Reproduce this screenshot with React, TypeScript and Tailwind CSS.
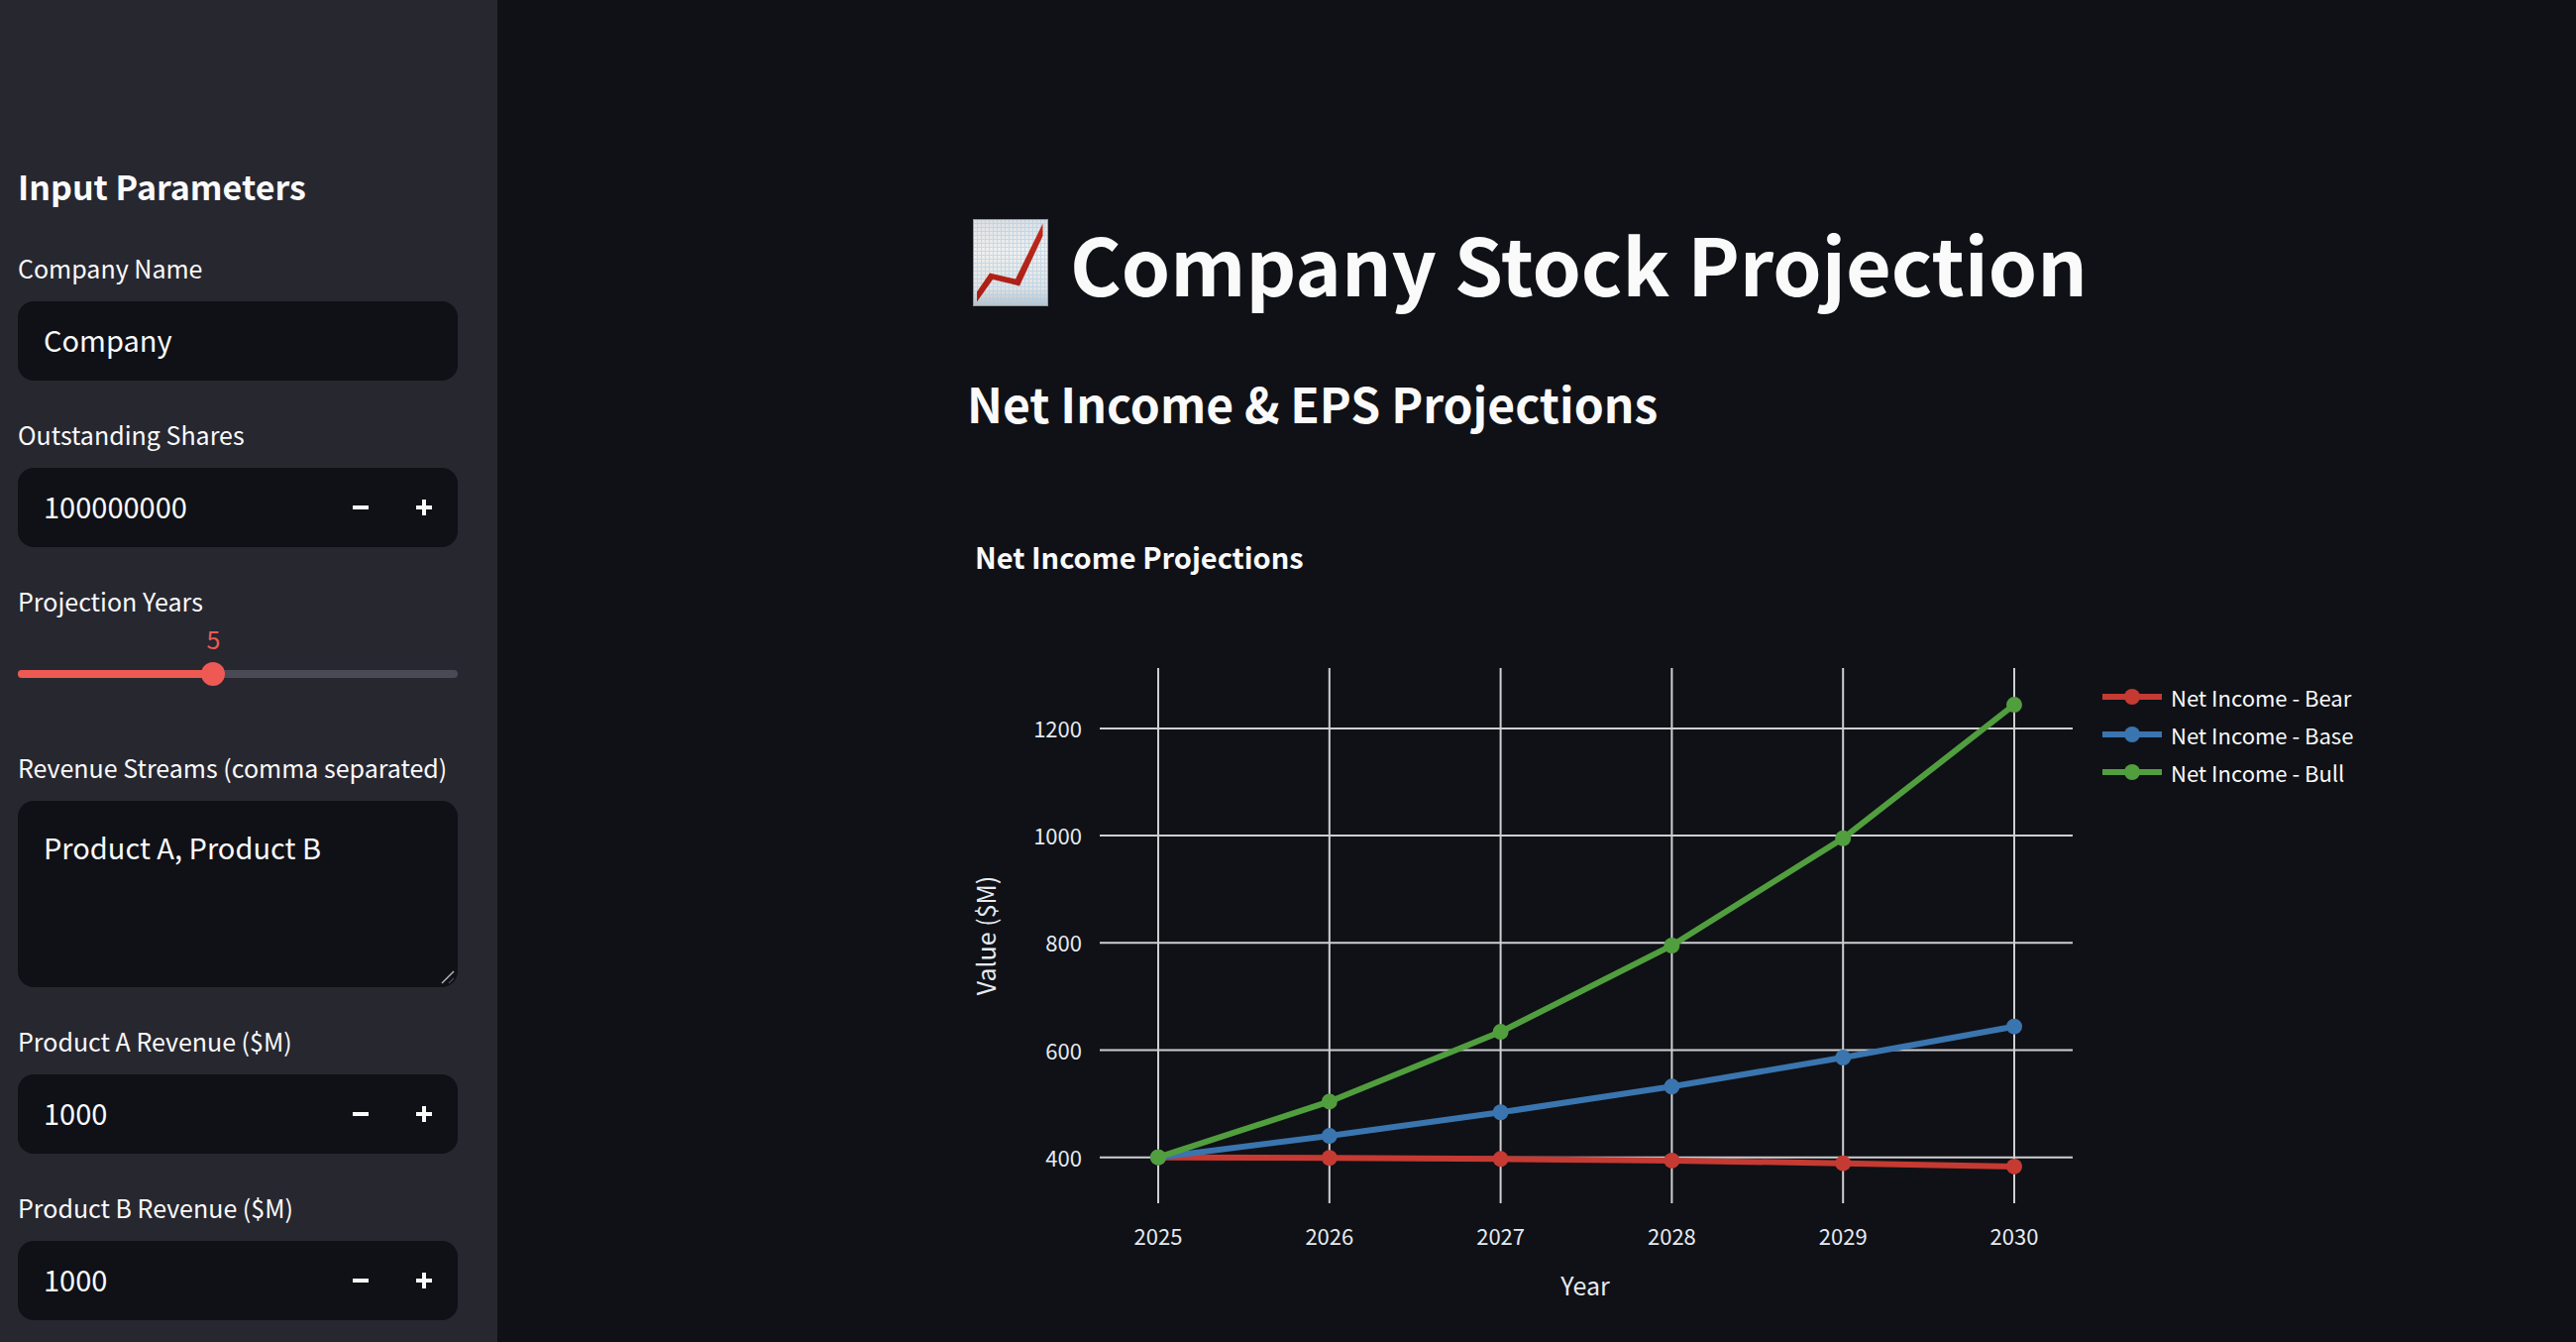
import { useState } from "react";

const GRID_COLOR = "#cfcfd2";
const FONT = "font-['Noto_Sans_CJK_SC','Noto_Sans',sans-serif]";

const years = [2025, 2026, 2027, 2028, 2029, 2030];
const ticks = [400, 600, 800, 1000, 1200];
const series = [
  { name: "Net Income - Bear", color: "#c53a32", values: [400, 399, 397, 394, 389, 383] },
  { name: "Net Income - Base", color: "#3a75af", values: [400, 440, 484, 532, 586, 644] },
  { name: "Net Income - Bull", color: "#519e3e", values: [400, 504, 634, 795, 995, 1244] },
];

const xOf = (i: number) => 193 + i * 172.8;
const yOf = (v: number) => 667.7 - ((v - 400) / 200) * 108.2;

function Label({ id, children }: { id: string; children: string }) {
  return (
    <label htmlFor={id} className="mb-3 block text-[25px] leading-[44px] whitespace-nowrap">
      {children}
    </label>
  );
}

function NumberField({ id, label, initial }: { id: string; label: string; initial: number }) {
  const [value, setValue] = useState(initial);
  return (
    <div>
      <Label id={id}>{label}</Label>
      <div className="flex h-20 items-stretch overflow-hidden rounded-2xl bg-[#0f1116]">
        <input
          id={id}
          type="text"
          inputMode="numeric"
          value={value}
          onChange={(e) => setValue(Number(e.target.value) || 0)}
          className="min-w-0 flex-1 bg-transparent pb-1 pl-[26px] text-[29px] leading-[44px] outline-none"
        />
        <button
          type="button"
          aria-label={"Decrease " + label}
          onClick={() => setValue(value - 1)}
          className="flex w-16 items-center justify-center"
        >
          <svg width="16" height="16" viewBox="0 0 16 16" fill="currentColor" aria-hidden="true">
            <path d="M0 6h16v4H0z" />
          </svg>
        </button>
        <button
          type="button"
          aria-label={"Increase " + label}
          onClick={() => setValue(value + 1)}
          className="mr-[2px] flex w-16 items-center justify-center"
        >
          <svg width="16" height="16" viewBox="0 0 16 16" fill="currentColor" aria-hidden="true">
            <path d="M0 6h6V0h4v6h6v4h-6v6H6v-6H0z" />
          </svg>
        </button>
      </div>
    </div>
  );
}

function YearsSlider() {
  const [years, setYears] = useState(5);
  const percent = ((years - 1) / 9) * 100 + "%";
  return (
    <div className="h-[136px]">
      <label htmlFor="years" className="block text-[25px] leading-[44px]">
        Projection Years
      </label>
      <div className="relative pt-10">
        <output
          htmlFor="years"
          className="absolute top-0 -translate-x-1/2 text-[25px] leading-8 text-[#ee5a53]"
          style={{ left: percent }}
        >
          {years}
        </output>
        <div className="relative flex h-6 items-center">
          <div className="h-2 w-full overflow-hidden rounded-full bg-[#494a56]">
            <div className="h-full bg-[#ee5a53]" style={{ width: percent }} />
          </div>
          <input
            id="years"
            type="range"
            min={1}
            max={10}
            value={years}
            onChange={(e) => setYears(Number(e.target.value))}
            className="absolute -left-3 h-6 w-[calc(100%+24px)] appearance-none bg-transparent outline-none [&::-webkit-slider-thumb]:size-6 [&::-webkit-slider-thumb]:appearance-none [&::-webkit-slider-thumb]:rounded-full [&::-webkit-slider-thumb]:bg-[#ee5a53]"
          />
        </div>
      </div>
    </div>
  );
}

function Sidebar() {
  return (
    <aside className="flex w-[502px] shrink-0 flex-col bg-[#272730] pt-[160px] pr-10 pb-[22px] pl-[18px]">
      <h2 className="mb-8 text-[34px] leading-[56px] font-semibold">Input Parameters</h2>
      <form className="flex flex-col gap-8" onSubmit={(e) => e.preventDefault()}>
        <div>
          <Label id="company">Company Name</Label>
          <input
            id="company"
            type="text"
            defaultValue="Company"
            className="block h-20 w-full rounded-2xl bg-[#0f1116] px-[26px] pb-1 text-[29px] leading-[44px] outline-none"
          />
        </div>
        <NumberField id="shares" label="Outstanding Shares" initial={100000000} />
        <YearsSlider />
        <div>
          <Label id="streams">Revenue Streams (comma separated)</Label>
          <div className="relative">
            <textarea
              id="streams"
              defaultValue="Product A, Product B"
              className="block h-[188px] w-full resize-none rounded-2xl bg-[#0f1116] px-[26px] py-6 text-[29px] leading-[44px] outline-none"
            />
            <svg
              className="pointer-events-none absolute right-[3px] bottom-[3px]"
              width="14"
              height="14"
              viewBox="0 0 14 14"
              fill="none"
              aria-hidden="true"
            >
              <path d="M1 13 13 1" stroke="#b8b8ba" strokeWidth="1.4" />
              <path d="M8 13 13 8" stroke="#4a4b50" strokeWidth="1.2" />
            </svg>
          </div>
        </div>
        <NumberField id="revenue-a" label="Product A Revenue ($M)" initial={1000} />
        <NumberField id="revenue-b" label="Product B Revenue ($M)" initial={1000} />
      </form>
    </aside>
  );
}

function ChartEmoji() {
  return (
    <svg width="76" height="88" viewBox="0 0 76 88" className="shrink-0" role="img" aria-label="Chart increasing">
      <defs>
        <linearGradient id="paper" x1="0" y1="0" x2="0" y2="1">
          <stop offset="0" stopColor="#dce0e4" />
          <stop offset="0.35" stopColor="#f0f0ee" />
          <stop offset="0.8" stopColor="#e2e3e4" />
          <stop offset="1" stopColor="#bcc1c6" />
        </linearGradient>
        <pattern id="squares" width="4" height="4" patternUnits="userSpaceOnUse">
          <path d="M0 0.5H4M0.5 0V4" stroke="#a9cbe6" strokeWidth="1" opacity="0.6" />
        </pattern>
        <linearGradient id="trend" x1="0" y1="0" x2="0" y2="1">
          <stop offset="0" stopColor="#bf2a1c" />
          <stop offset="1" stopColor="#a81d14" />
        </linearGradient>
      </defs>
      <rect x="0.5" y="0.5" width="75" height="87" fill="url(#paper)" />
      <rect x="0.5" y="0.5" width="75" height="87" fill="url(#squares)" />
      <rect x="0.5" y="0.5" width="75" height="87" fill="none" stroke="#8f9ba5" />
      <path d="M4 73.500 17 54.500 43 60.500 70.500 4.500V17L47 67.500 20 61 4 83.500z" fill="url(#trend)" />
    </svg>
  );
}

function NetIncomeChart() {
  return (
    <svg
      viewBox="0 0 1408 840"
      className="block w-full text-[22px]"
      role="img"
      aria-label="Net income projections by year"
    >
      <text x="8" y="74" fill="#fafafa" className="text-[29px] font-bold">
        Net Income Projections
      </text>
      <g stroke={GRID_COLOR} strokeWidth="2">
        {years.map((year, i) => (
          <path key={year} d={`M${xOf(i)} 174V714`} />
        ))}
        {ticks.map((tick) => (
          <path key={tick} d={`M134 ${yOf(tick)}H1116`} />
        ))}
      </g>
      <g fill="#e6eaf1">
        {ticks.map((tick) => (
          <text key={tick} x="116" y={yOf(tick) + 9} textAnchor="end">
            {tick}
          </text>
        ))}
        {years.map((year, i) => (
          <text key={year} x={xOf(i)} y="756" textAnchor="middle">
            {year}
          </text>
        ))}
        <text x="624" y="807" textAnchor="middle" className="text-[25px]">
          Year
        </text>
        <text transform="translate(29 444) rotate(-90)" textAnchor="middle" className="text-[25px]">
          Value ($M)
        </text>
      </g>
      {series.map((s) => (
        <g key={s.name} fill={s.color}>
          <polyline
            points={s.values.map((v, i) => `${xOf(i)},${yOf(v)}`).join(" ")}
            fill="none"
            stroke={s.color}
            strokeWidth="6"
          />
          {s.values.map((v, i) => (
            <circle key={i} cx={xOf(i)} cy={yOf(v)} r="8" />
          ))}
        </g>
      ))}
      {series.map((s, i) => (
        <g key={s.name} fill={s.color}>
          <path d={`M1146 ${203 + i * 38}h60`} stroke={s.color} strokeWidth="6" />
          <circle cx="1176" cy={203 + i * 38} r="8" />
          <text x="1215" y={213 + i * 38} fill="#fafafa">
            {s.name}
          </text>
        </g>
      ))}
    </svg>
  );
}

export default function App() {
  return (
    <div className={`flex min-h-screen bg-[#0f1116] text-[#fafafa] ${FONT}`}>
      <Sidebar />
      <main className="min-w-0 flex-1 pt-[212px] pr-[216px] pl-[474px]">
        <h1 className="flex items-center gap-[22px] pl-[6px] text-[79px] leading-[106px] font-bold whitespace-nowrap">
          <ChartEmoji />
          Company Stock Projection
        </h1>
        <h2 className="mt-12 mb-[54px] text-[48px] leading-[80px] font-semibold whitespace-nowrap">
          Net Income &amp; EPS Projections
        </h2>
        <NetIncomeChart />
      </main>
    </div>
  );
}
